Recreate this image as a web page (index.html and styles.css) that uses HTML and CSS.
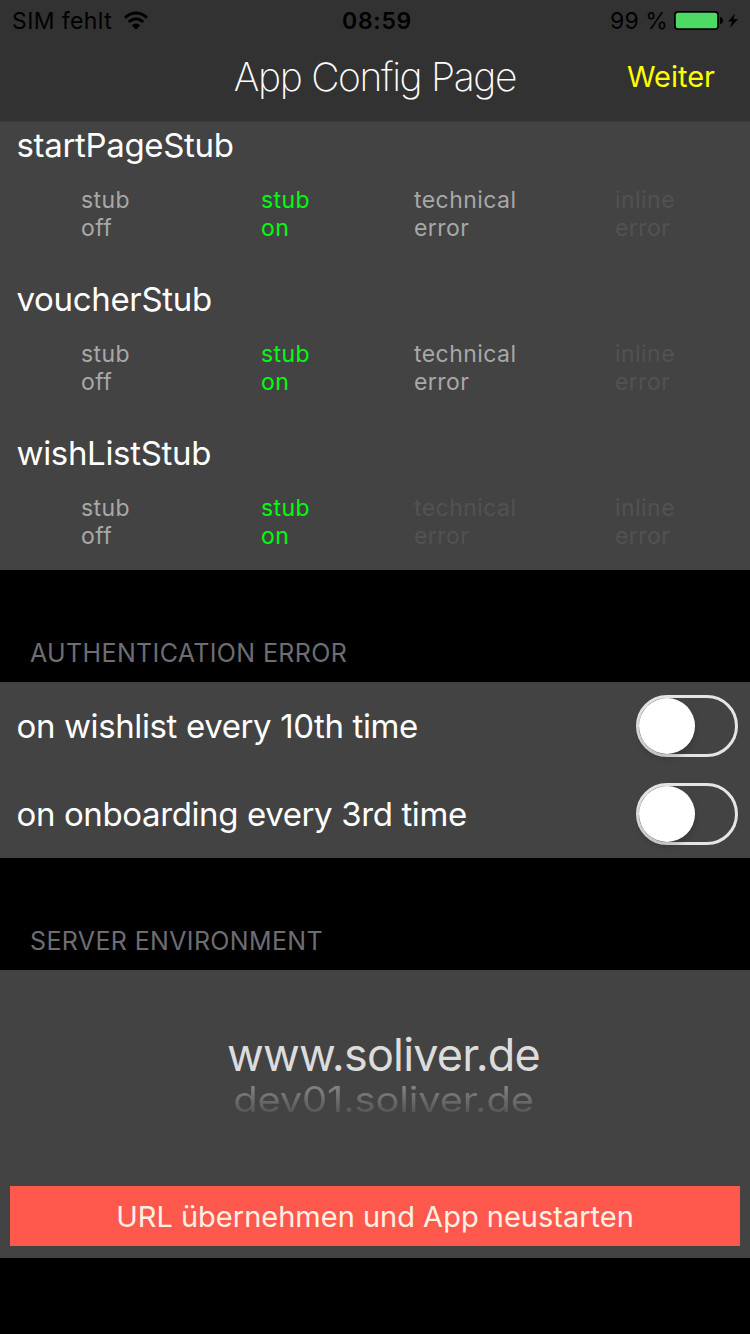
FILE: index.html
```
<!DOCTYPE html>
<html lang="de">
<head>
<meta charset="utf-8">
<title>App Config Page</title>
<link rel="stylesheet" href="styles.css">
</head>
<body>
<header class="top">
  <div class="status">
    <div class="status-left"><span class="carrier">SIM fehlt</span>
      <svg class="wifi" width="26" height="20" viewBox="0 0 26 20"><path d="M2 6.6Q13 -2.6 24 6.6" fill="none" stroke="#000" stroke-width="3"/><path d="M5.8 10.8Q13 4.6 20.2 10.8" fill="none" stroke="#000" stroke-width="3"/><path d="M8.8 14.2Q13 10.6 17.2 14.2L13 18.8Z"/></svg>
    </div>
    <span class="time">08:59</span>
    <div class="status-right"><span class="percent">99 %</span>
      <svg class="battery" width="66" height="20" viewBox="0 0 66 20"><rect x="0" y="0" width="45" height="19" rx="4"/><rect x="1.8" y="1.8" width="41.4" height="15.4" rx="2.5" fill="#4cd964"/><path d="M46 6Q49 6.5 49 9.5T46 13Z"/><path d="M61 2.5L54 10.5H58L56 17L64 8H59.5Z"/></svg>
    </div>
  </div>
  <nav class="nav"><h1 class="title">App Config Page</h1><a class="next">Weiter</a></nav>
</header>
<main>
  <section class="stubs">
    <div class="stub"><h2 class="label">startPageStub</h2>
      <div class="options"><span>stub<br>off</span><span class="on">stub<br>on</span><span>technical<br>error</span><span class="disabled">inline<br>error</span></div></div>
    <div class="stub"><h2 class="label">voucherStub</h2>
      <div class="options"><span>stub<br>off</span><span class="on">stub<br>on</span><span>technical<br>error</span><span class="disabled">inline<br>error</span></div></div>
    <div class="stub"><h2 class="label">wishListStub</h2>
      <div class="options"><span>stub<br>off</span><span class="on">stub<br>on</span><span class="disabled">technical<br>error</span><span class="disabled">inline<br>error</span></div></div>
  </section>
  <h3 class="section">AUTHENTICATION ERROR</h3>
  <section class="switches">
    <div class="row"><span class="label">on wishlist every 10th time</span><span class="switch"><i class="knob"></i></span></div>
    <div class="row"><span class="label">on onboarding every 3rd time</span><span class="switch"><i class="knob"></i></span></div>
  </section>
  <h3 class="section">SERVER ENVIRONMENT</h3>
  <section class="environment">
    <div class="picker"><div class="selected">www.soliver.de</div><div class="following">dev01.soliver.de</div></div>
    <button class="apply">URL übernehmen und App neustarten</button>
  </section>
</main>
</body>
</html>
```
FILE: styles.css
```
* { box-sizing: border-box; }
body {
  margin: 0;
  width: 750px;
  height: 1334px;
  overflow: hidden;
  background: #000;
  color: #fff;
  font-family: Inter, "Liberation Sans", sans-serif;
}
h1, h2, h3 { margin: 0; font-weight: 400; }
svg { display: block; }

.top { height: 122px; background: #323232; border-bottom: 1px solid #3a3a3a; }
.status {
  display: grid;
  grid-template-columns: 1fr auto 1fr;
  align-items: center;
  height: 40px;
  padding: 1px 10px 0 12px;
  color: #000;
  font-size: 23px;
  line-height: 39px;
}
.carrier, .time, .percent { padding-top: 1px; }
.status-left, .status-right { display: flex; align-items: center; }
.status-left { gap: 11px; }
.status-right { justify-content: flex-end; gap: 6px; }
.carrier { letter-spacing: 0.4px; }
.time { padding-left: 2px; font-weight: 600; letter-spacing: 0.7px; }
.percent { letter-spacing: 0.1px; }
.nav {
  display: grid;
  grid-template-columns: 1fr auto 1fr;
  align-items: center;
  height: 72px;
  padding: 0 35px;
}
.title {
  grid-column: 2;
  font-size: 39px;
  font-weight: 200;
  line-height: 71px;
  padding-bottom: 1px;
  letter-spacing: -1.35px;
}
.next { justify-self: end; color: #ff0; font-size: 29px; line-height: 72px; padding-top: 1px; }

.stubs { height: 448px; padding-top: 3px; background: #434343; }
.stub { height: 154px; }
.label { font-size: 33px; line-height: 40px; letter-spacing: -0.33px; }
.stub .label { padding-left: 16.5px; }
.options {
  display: grid;
  grid-template-columns: 180px 153px 201px auto;
  padding: 21px 0 0 81px;
  color: #a8a8a8;
  font-size: 23px;
  line-height: 28px;
  letter-spacing: 0.45px;
}
.options .on { color: #00fb10; }
.options .disabled { color: #525252; }

.section {
  height: 112px;
  padding: 63px 0 0 30px;
  color: #6d6d72;
  font-size: 25px;
  line-height: 40px;
  letter-spacing: 0.36px;
}
.switches { height: 176px; background: #434343; }
.row {
  display: flex;
  align-items: center;
  justify-content: space-between;
  height: 88px;
  padding: 0 12px 0 16.5px;
}
.row .label { letter-spacing: -0.38px; }
.switch {
  width: 102px;
  height: 62px;
  border: 3px solid #e5e5e5;
  border-radius: 31px;
}
.knob {
  display: block;
  width: 56px;
  height: 56px;
  border-radius: 50%;
  background: #fff;
  box-shadow: 0 4px 6px rgba(0, 0, 0, 0.2);
}
.environment { height: 288px; padding: 0 10px; background: #434343; }
.picker { height: 216px; padding: 60px 0 0 17px; text-align: center; }
.selected { color: #dcdcdc; font-size: 45px; line-height: 50px; letter-spacing: -0.8px; }
.following {
  margin-top: 5px;
  font-size: 40px;
  line-height: 34px;
  letter-spacing: -0.2px;
  color: transparent;
  background: linear-gradient(#858585, #525252);
  background-clip: text;
  transform: scaleY(0.88);
  transform-origin: top;
}
.apply {
  display: block;
  width: 730px;
  height: 60px;
  padding: 1px 0 0;
  border: 0;
  background: #ff594d;
  color: #fff0e5;
  font: 400 29px/59px Inter, "Liberation Sans", sans-serif;
}
```
